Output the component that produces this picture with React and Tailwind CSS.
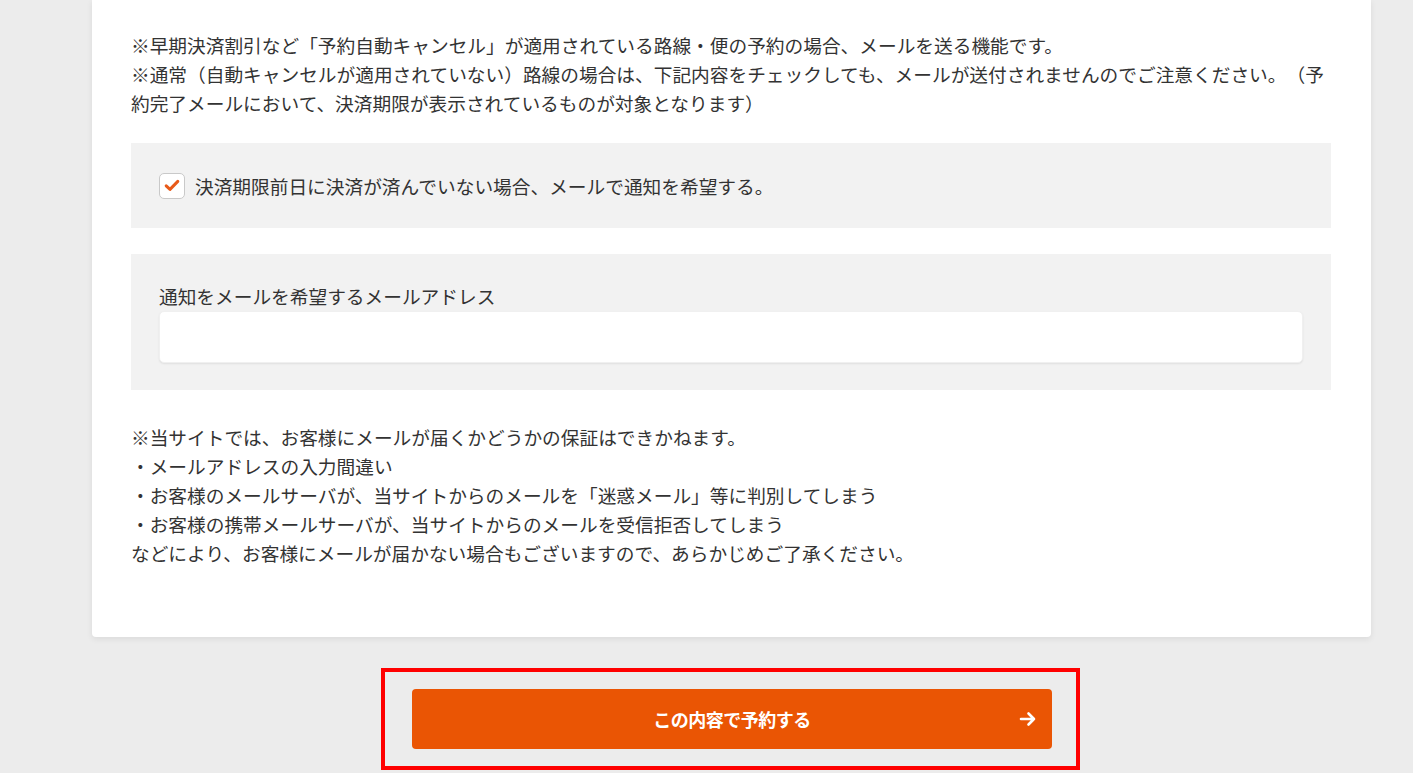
export default function App() {
  const font = { fontFamily: '"Noto Sans CJK JP", "Noto Sans", sans-serif' };
  return (
    <div
      className="min-h-[773px] w-full bg-[#ececec] text-[#333333] [text-spacing-trim:space-all]"
      style={font}
    >
      <div className="ml-[92px] w-[1279px] rounded-b-[4px] bg-white pl-[39px] pr-[40px] pt-[30px] pb-[70px] shadow-[0_2px_6px_rgba(0,0,0,0.08)]">
        <p className="text-[18.7px] leading-[29px] whitespace-nowrap">
          ※早期決済割引など「予約自動キャンセル」が適用されている路線・便の予約の場合、メールを送る機能です。
          <br />
          ※通常（自動キャンセルが適用されていない）路線の場合は、下記内容をチェックしても、メールが送付されませんのでご注意ください。（予
          <br />
          約完了メールにおいて、決済期限が表示されているものが対象となります）
        </p>

        <div className="mt-[26px] flex h-[85px] items-center bg-[#f2f2f2] px-[28px]">
          <span className="flex h-[26px] w-[26px] shrink-0 items-center justify-center rounded-[5px] border border-[#c9c9c9] bg-white">
            <svg width="16" height="13" viewBox="0 0 16 13" fill="none">
              <path
                d="M2.2 6.8 L6 10.4 L13.8 2.4"
                stroke="#e85a19"
                strokeWidth="3"
                strokeLinecap="round"
                strokeLinejoin="round"
              />
            </svg>
          </span>
          <span className="ml-[10px] text-[18.7px] leading-[29px]">
            決済期限前日に決済が済んでいない場合、メールで通知を希望する。
          </span>
        </div>

        <div className="mt-[26px] bg-[#f2f2f2] px-[28px] pt-[27px] pb-[27px]">
          <div className="text-[18.7px] leading-[30px]">通知をメールを希望するメールアドレス</div>
          <div className="h-[52px] w-full rounded-[5px] border border-[#f0f0f0] bg-white shadow-[0_1px_2px_rgba(0,0,0,0.08)]" />
        </div>

        <div className="mt-[32px] text-[18.7px] leading-[29px]">
          <div>※当サイトでは、お客様にメールが届くかどうかの保証はできかねます。</div>
          <div>・メールアドレスの入力間違い</div>
          <div>・お客様のメールサーバが、当サイトからのメールを「迷惑メール」等に判別してしまう</div>
          <div>・お客様の携帯メールサーバが、当サイトからのメールを受信拒否してしまう</div>
          <div>などにより、お客様にメールが届かない場合もございますので、あらかじめご了承ください。</div>
        </div>
      </div>

      <div className="ml-[92px] flex w-[1279px] pt-[31px] pl-[289px]">
        <div className="w-[699px] border-4 border-[#ff0000] pl-[27px] pr-[24px] py-[17px]">
          <button className="relative flex h-[60px] w-[640px] items-center justify-center rounded-[4px] bg-[#ea5504] text-white">
            <span className="text-[18px] font-bold tracking-[-0.5px]">この内容で予約する</span>
            <svg
              className="absolute right-[14px] top-1/2 -translate-y-1/2"
              width="20"
              height="18"
              viewBox="0 0 20 18"
              fill="none"
            >
              <path
                d="M3 9 H16 M10.5 3.5 L16 9 L10.5 14.5"
                stroke="white"
                strokeWidth="2.6"
                strokeLinecap="round"
                strokeLinejoin="round"
              />
            </svg>
          </button>
        </div>
      </div>
    </div>
  );
}
